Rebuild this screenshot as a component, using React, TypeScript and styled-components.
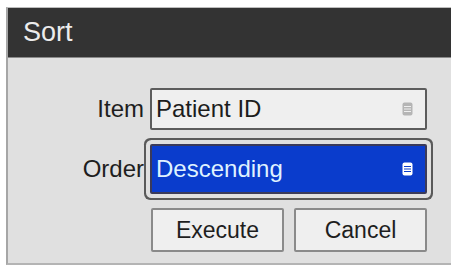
import styled, { createGlobalStyle } from "styled-components";

const GlobalStyle = createGlobalStyle`
  *, *::before, *::after {
    margin: 0;
    padding: 0;
    box-sizing: border-box;
  }

  html, body {
    width: 100%;
    height: 100%;
    background: #ffffff;
    overflow: hidden;
    font-family: "Liberation Sans", Arial, sans-serif;
  }
`;

const Dialog = styled.div`
  margin: 7px 0 0 6px;
  width: 445px;
  height: 258px;
  border-left: 2px solid #a6a6a6;
  border-bottom: 2px solid #b4b4b4;
  border-top: 1px solid #bdbdbd;
  background: #e0e0e0;
  display: flex;
  flex-direction: column;
`;

const TitleBar = styled.div`
  height: 50px;
  background: #333333;
  border-bottom: 1px solid #8a8a8a;
  display: flex;
  align-items: center;
  padding-left: 15px;
  color: #ececec;
  font-size: 27px;
`;

const Body = styled.div`
  flex: 1;
  padding-top: 30px;
  display: grid;
  grid-template-columns: 136px 277px;
  align-content: start;
  column-gap: 6px;
  row-gap: 14px;
  align-items: center;
`;

const Label = styled.div`
  text-align: right;
  font-size: 24px;
  color: #1e1e1e;
  white-space: nowrap;
`;

const Field = styled.div<{ $active?: boolean }>`
  position: relative;
  height: ${(p) => (p.$active ? "50px" : "42px")};
  display: flex;
  align-items: center;
  justify-content: space-between;
  padding: 0 12px 0 4px;
  font-size: 24px;
  border: 2px solid ${(p) => (p.$active ? "#3a3a5a" : "#5c5c5c")};
  background: ${(p) => (p.$active ? "#0a3ccc" : "#efefef")};
  color: ${(p) => (p.$active ? "#dff2ff" : "#1c1c1c")};
  border-radius: 2px;
  box-shadow: ${(p) =>
    p.$active ? "0 0 0 4px #e0e0e0, 0 0 0 6px #5a5a5a" : "none"};
`;

const ListIcon = ({ color, line }: { color: string; line: string }) => (
  <svg width="11" height="14" viewBox="0 0 11 14">
    <rect x="0.5" y="0.5" width="10" height="13" rx="2" fill={color} />
    <path d="M2 4.5h7M2 7h7M2 9.5h7" stroke={line} strokeWidth="1.2" />
  </svg>
);

const Buttons = styled.div`
  grid-column: 2;
  display: flex;
  gap: 10px;
  padding-left: 1px;
`;

const Button = styled.div`
  width: 133px;
  height: 44px;
  display: flex;
  align-items: center;
  justify-content: center;
  font-size: 23px;
  color: #1e1e1e;
  background: #efefef;
  border: 2px solid #8a8a8a;
  border-radius: 2px;
`;

export default function App() {
  return (
    <>
      <GlobalStyle />
      <Dialog>
        <TitleBar>Sort</TitleBar>
        <Body>
          <Label>Item</Label>
          <Field>
            Patient ID
            <ListIcon color="#b5b5b5" line="#efefef" />
          </Field>
          <Label>Order</Label>
          <Field $active>
            Descending
            <ListIcon color="#ffffff" line="#0a3ccc" />
          </Field>
          <Buttons>
            <Button>Execute</Button>
            <Button>Cancel</Button>
          </Buttons>
        </Body>
      </Dialog>
    </>
  );
}
